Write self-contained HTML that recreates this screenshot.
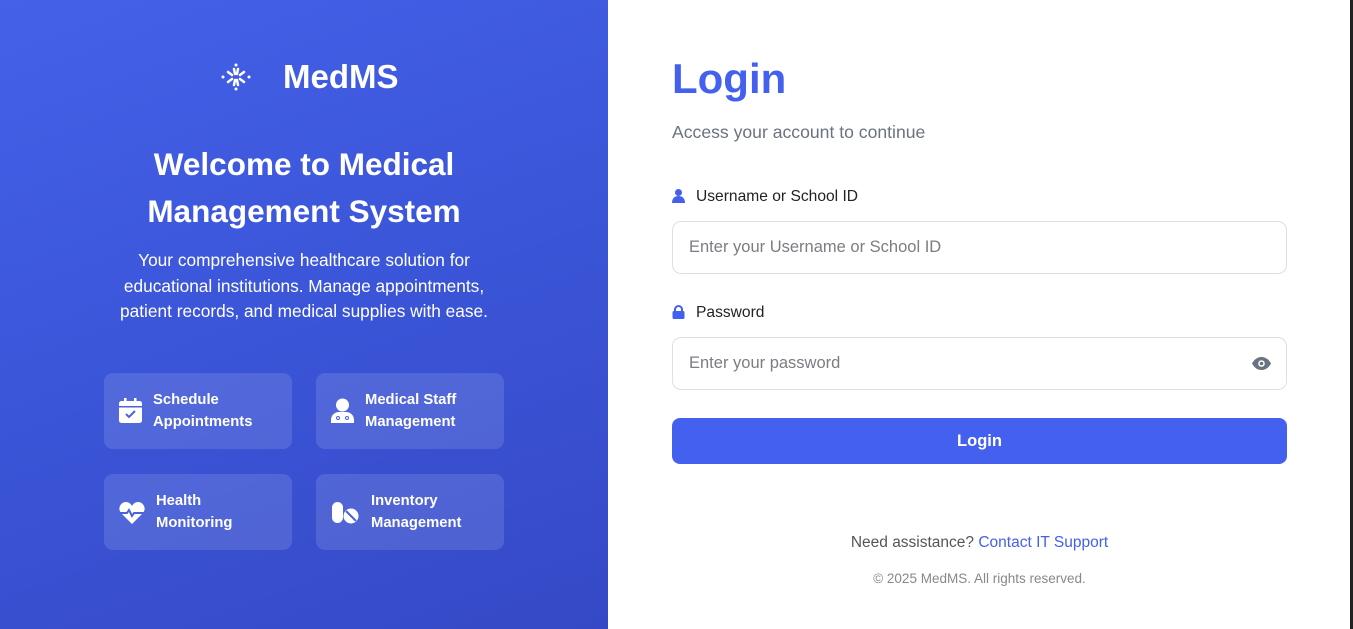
<!DOCTYPE html>
<html><head><style>
*{margin:0;padding:0;box-sizing:border-box}
body{width:1353px;height:629px;overflow:hidden;font-family:"Liberation Sans",sans-serif;position:relative;background:#fff}
.left{position:absolute;left:0;top:0;width:608px;height:629px;background:linear-gradient(160deg,#4461e8 0%,#3b55d8 50%,#3549c6 100%);color:#fff;text-align:center}
h1{position:absolute;top:141px;left:0;width:608px;font-size:31.5px;line-height:47px;font-weight:bold}
.desc{position:absolute;top:248px;left:0;width:608px;font-size:17.3px;line-height:25.5px}
.card{position:absolute;width:188px;height:76px;background:rgba(255,255,255,0.12);border-radius:9px;text-align:left;font-size:14.8px;font-weight:bold;line-height:22px}
.card svg{position:absolute}
.card div{position:absolute;white-space:nowrap}
.right{position:absolute;left:672px;top:0;width:615px}
.title{position:absolute;top:55px;font-size:42px;font-weight:bold;color:#4361ee}
.sub{position:absolute;top:122px;font-size:17.6px;color:#6b7280;white-space:nowrap}
.lbl{position:absolute;font-size:15.6px;color:#222;white-space:nowrap}
.lbl svg{position:absolute;left:0;top:1px}
.lbl span{position:absolute;left:24px}
.inp{position:absolute;width:615px;height:53px;border:1px solid #dcdfe4;border-radius:9px;font-size:16.5px;color:#7b7d82;padding:16px 16px}
.btn{position:absolute;top:418px;width:615px;height:46px;background:#4361ee;border-radius:8px;color:#fff;font-weight:bold;font-size:16.5px;text-align:center;line-height:46px}
.help{position:absolute;top:534px;width:615px;text-align:center;font-size:15.5px;color:#555}
.help b{font-weight:normal;color:#4361ee}
.copy{position:absolute;top:571px;width:615px;text-align:center;font-size:13.5px;color:#888}
.bar{position:absolute;left:1350px;top:0;width:3px;height:629px;background:#222}
</style></head><body>
<div class="left">
<svg style="position:absolute;left:220px;top:62px" width="32" height="30" viewBox="0 0 32 30" fill="none" stroke="#fff" stroke-width="2.5" stroke-linecap="round"><circle cx="16" cy="3" r="1.5" fill="#fff" stroke="none"/><circle cx="16" cy="27" r="1.5" fill="#fff" stroke="none"/><circle cx="3" cy="15" r="1.5" fill="#fff" stroke="none"/><circle cx="29" cy="15" r="1.5" fill="#fff" stroke="none"/><path d="M14 7l1 5M18 23l-1-5M8 10l4 3M24 20l-4-3M8 20l4-3M24 10l-4 3M18 7l-1 5M14 23l1-5"/></svg>
<div style="position:absolute;left:283px;top:58px;font-size:33px;font-weight:bold">MedMS</div>
<h1>Welcome to Medical<br>Management System</h1>
<div class="desc">Your comprehensive healthcare solution for<br>educational institutions. Manage appointments,<br>patient records, and medical supplies with ease.</div>
<div class="card" style="left:104px;top:373px"><svg style="left:15px;top:25px" width="23" height="25" viewBox="0 0 23 25"><rect x="5" y="0" width="2.5" height="5" fill="#fff"/><rect x="15" y="0" width="2.5" height="5" fill="#fff"/><rect x="0" y="3" width="23" height="22" rx="2.5" fill="#fff"/><rect x="0" y="8" width="23" height="1.5" fill="#4a63dc"/><path d="M7 16l3 3 6-6" stroke="#4a63dc" stroke-width="2" fill="none"/></svg><div style="left:49px;top:16px">Schedule<br>Appointments</div></div>
<div class="card" style="left:316px;top:373px"><svg style="left:15px;top:25px" width="23" height="25" viewBox="0 0 23 25"><circle cx="11.5" cy="7" r="6.5" fill="#fff"/><path d="M0 25v-3c0-5 4-8 8-8h7c4 0 8 3 8 8v3z" fill="#fff"/><circle cx="7" cy="20" r="1.5" fill="none" stroke="#4a63dc"/><circle cx="16" cy="20" r="1.5" fill="none" stroke="#4a63dc"/></svg><div style="left:49px;top:16px">Medical Staff<br>Management</div></div>
<div class="card" style="left:104px;top:474px"><svg style="left:15px;top:28px" width="26" height="22" viewBox="0 0 26 22"><path d="M13 22L2 11C-2 6 2 0 7 0c3 0 5 2 6 4 1-2 3-4 6-4 5 0 9 6 5 11z" fill="#fff"/><path d="M1 11h7l2-3 3 6 2-3h10" stroke="#4a63dc" stroke-width="2" fill="none"/></svg><div style="left:52px;top:16px">Health<br>Monitoring</div></div>
<div class="card" style="left:316px;top:474px"><svg style="left:15px;top:27px" width="28" height="24" viewBox="0 0 28 24"><rect x="1" y="1" width="11" height="21" rx="5.5" fill="#fff"/><circle cx="20" cy="15" r="7.5" fill="#fff"/><path d="M15 10l10 10" stroke="#4a63dc" stroke-width="2"/></svg><div style="left:55px;top:16px">Inventory<br>Management</div></div>
</div>
<div class="right">
<div class="title">Login</div>
<div class="sub">Access your account to continue</div>
<div class="lbl" style="top:188px"><svg width="13" height="14" viewBox="0 0 13 14"><circle cx="6.5" cy="3.5" r="3.5" fill="#4361ee"/><path d="M0 14c0-5 3-7 6.5-7S13 9 13 14z" fill="#4361ee"/></svg><span>Username or School ID</span></div>
<div class="inp" style="top:221px">Enter your Username or School ID</div>
<div class="lbl" style="top:304px"><svg width="13" height="14" viewBox="0 0 13 14"><path d="M3 7V4.5a3.5 3.5 0 017 0V7" stroke="#4361ee" stroke-width="2" fill="none"/><rect x="0.5" y="6" width="12" height="8" rx="1.5" fill="#4361ee"/></svg><span>Password</span></div>
<div class="inp" style="top:337px">Enter your password<svg style="position:absolute;right:15px;top:19px" width="19" height="13" viewBox="0 0 19 13"><path d="M0 6.5C3 1 7 0 9.5 0S16 1 19 6.5C16 12 12 13 9.5 13S3 12 0 6.5z" fill="#6b7280"/><circle cx="9.5" cy="6.5" r="3.3" fill="#fff"/><circle cx="9.5" cy="6.5" r="1.8" fill="#6b7280"/></svg></div>
<div class="btn">Login</div>
<div class="help">Need assistance? <b>Contact IT Support</b></div>
<div class="copy">© 2025 MedMS. All rights reserved.</div>
</div>
<div class="bar"></div>
</body></html>
